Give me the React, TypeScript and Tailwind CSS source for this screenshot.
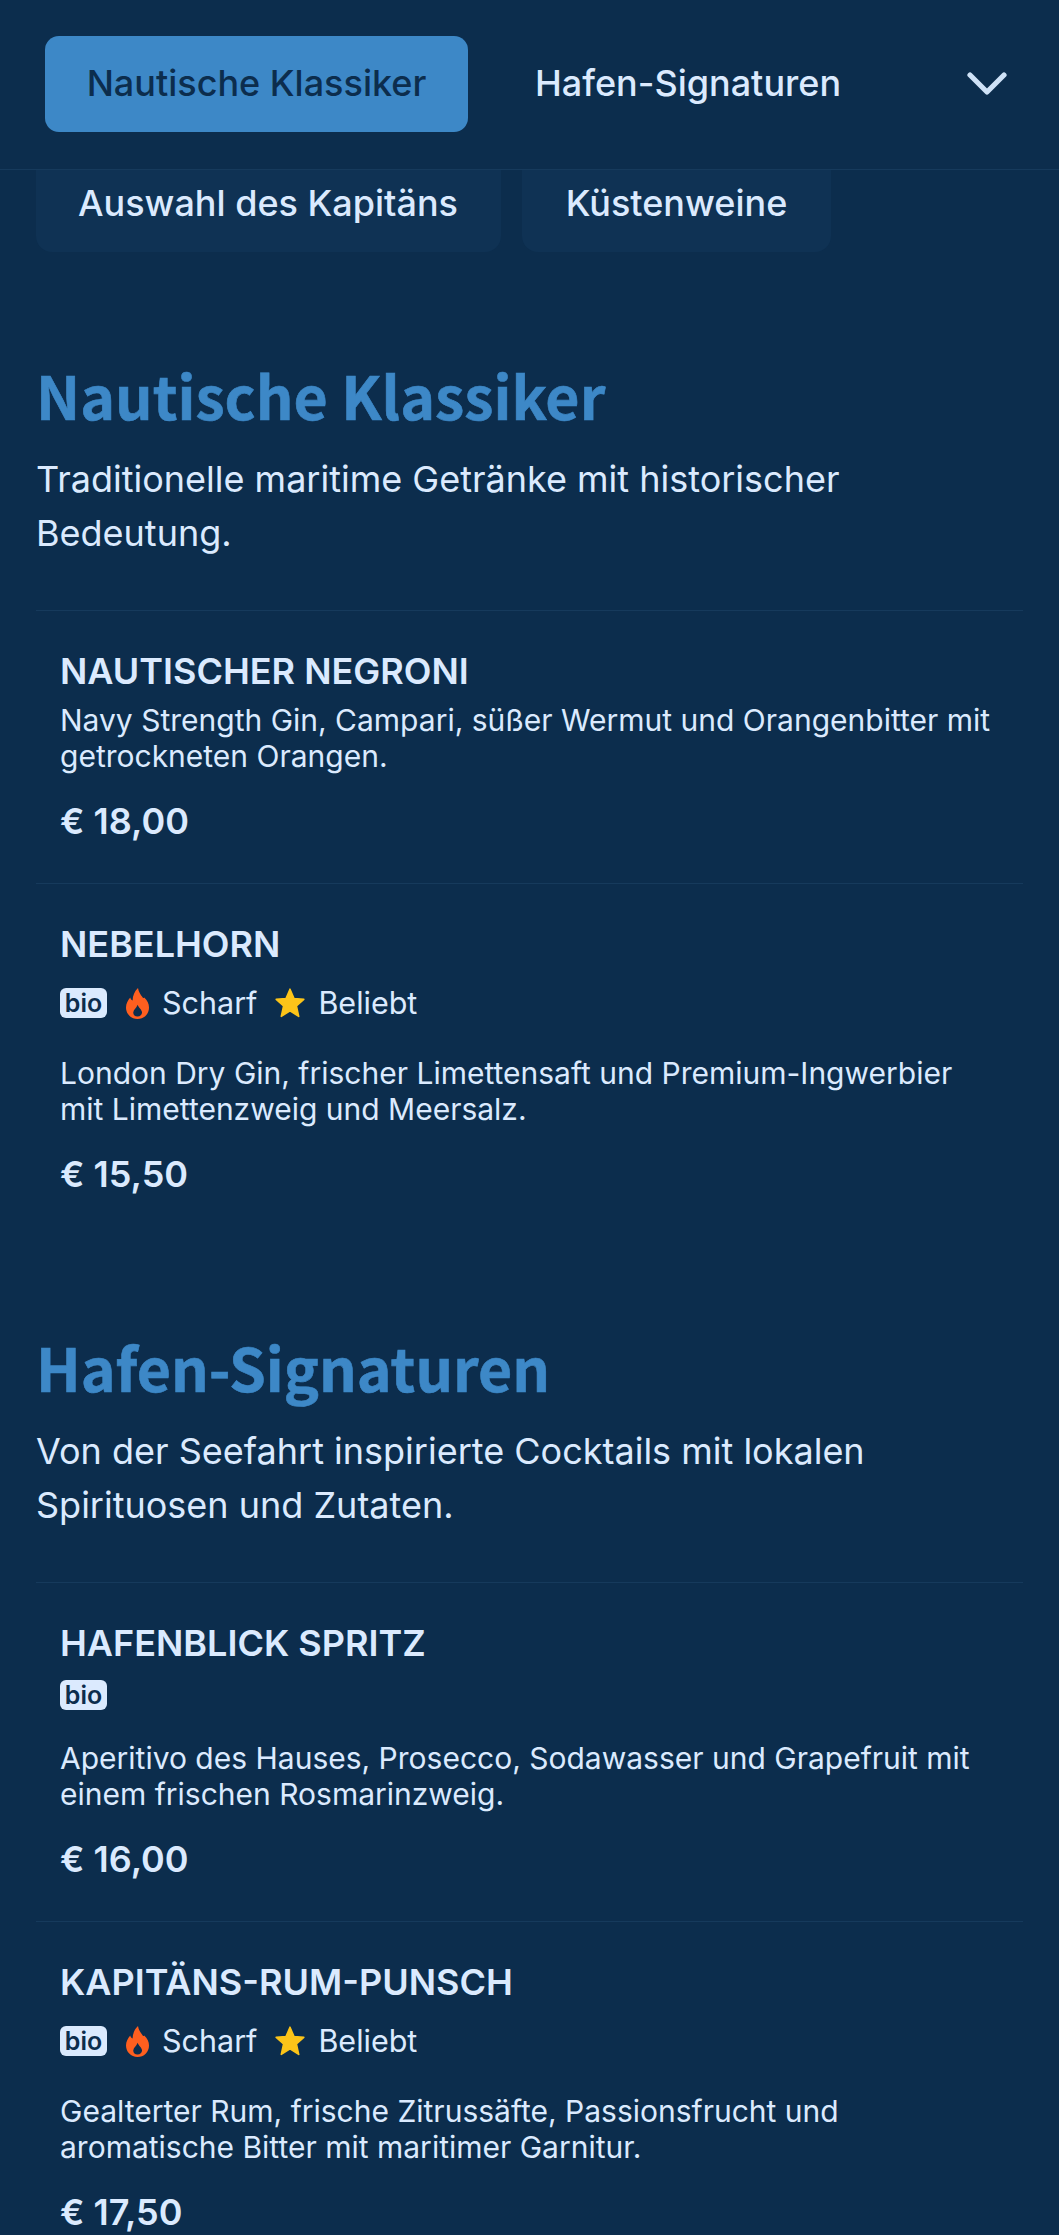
const inter = "font-['Inter','Liberation_Sans',sans-serif]";

function Flame() {
  return (
    <svg className="ml-[19px] shrink-0" width="23" height="31" viewBox="0 0 23 31" fill="#ff5f1f" fillRule="evenodd">
      <path d="M12 0C12.6 4 14.6 6.6 16.4 9C16.9 10 17.4 10.6 18.2 9.4C21.4 12.4 23 15.8 23 19.4C23 26 18 31 11.5 31C5 31 0 26 0 19.6C0 15.6 1.8 12.2 4.2 9.4C4.6 10.8 5.2 11.8 6.6 12.4C6.6 8 8.6 3 12 0ZM11.5 28.6C14.4 28.6 16.2 26.6 16 24.2C15.7 21.6 13 20.2 11.6 16.8C10.4 20 7.7 21.6 7.3 24.2C7 26.6 8.8 28.6 11.5 28.6Z" />
    </svg>
  );
}

function Star() {
  return (
    <svg className="ml-[18px] shrink-0" width="30" height="30" viewBox="0 0 30 30" fill="#fcc419" stroke="#fcc419" strokeWidth="1.6" strokeLinejoin="round">
      <path d="M15 1.2L19 10.6L28.8 11.4L21.4 17.9L23.7 28.4L15 22.9L6.3 28.4L8.6 17.9L1.2 11.4L11 10.6Z" />
    </svg>
  );
}

function Tags({ bio, full }: { bio?: boolean; full?: boolean }) {
  return (
    <div className={`flex items-center ${full ? "h-[34px] mt-[21px] mb-[35px]" : "h-[30px] mt-[16px] mb-[30px]"}`}>
      {bio && (
        <span className="flex items-center justify-center h-[30px] w-[47px] rounded-[6px] bg-[#dbeafe] text-[#0c2d4d] text-[25px] font-semibold leading-none">bio</span>
      )}
      {full && (
        <>
          <Flame />
          <span className="ml-[13px] text-[30.5px] text-[#dbeafe] leading-none">Scharf</span>
          <Star />
          <span className="ml-[13px] text-[30.5px] text-[#dbeafe] leading-none">Beliebt</span>
        </>
      )}
    </div>
  );
}

function Item({ name, desc, price, bio, full, last }: { name: string; desc: React.ReactNode; price: string; bio?: boolean; full?: boolean; last?: boolean }) {
  return (
    <div className={`px-[24px] pt-[39px] ${last ? "pb-0" : "pb-[40px] border-b border-[#163a5c]"}`}>
      <h3 className="text-[36px] leading-[42px] font-semibold text-[#dbeafe]">{name}</h3>
      {bio || full ? <Tags bio={bio} full={full} /> : <div className="h-[10px]" />}
      <p className="text-[30px] leading-[36px] text-[#dbeafe]">{desc}</p>
      <div className="mt-[25px] text-[36px] leading-[44px] font-semibold text-[#dbeafe]">{price}</div>
    </div>
  );
}

function Section({ title, desc, children }: { title: string; desc: React.ReactNode; children: React.ReactNode }) {
  return (
    <section>
      <h2 className="font-['Noto_Sans_CJK_SC',sans-serif] font-bold text-[59px] leading-[80px] [-webkit-text-stroke:0.6px_#3d88c7] text-[#3d88c7]">{title}</h2>
      <p className="mt-[17px] text-[36px] leading-[54px] text-[#dbeafe]">{desc}</p>
      <div className="mt-[50px] border-t border-[#163a5c]">{children}</div>
    </section>
  );
}

export default function App() {
  return (
    <div className={`${inter} w-[1059px] h-[2235px] overflow-hidden bg-[#0c2d4d]`}>
      <header className="h-[170px] flex items-center pl-[45px] pr-[52px] pb-[2px] border-b border-[#163a5c]">
        <div className="w-[423px] h-[96px] rounded-[14px] bg-[#3d88c7] flex items-center justify-center pb-[2px] text-[#0c2d4d] text-[36px] font-medium">Nautische Klassiker</div>
        <div className="ml-[67px] pb-[2px] text-[36px] text-[#dbeafe] font-medium">Hafen-Signaturen</div>
        <svg className="ml-auto" width="40" height="23" viewBox="0 0 40 23" fill="none" stroke="#cfe2f7" strokeWidth="5.2" strokeLinecap="round" strokeLinejoin="round"><path d="M3 3 L20 20 L37 3" /></svg>
      </header>
      <div className="flex gap-[21px] pl-[36px]">
        <div className="w-[465px] h-[82px] rounded-b-[16px] bg-[#0f3254] flex items-center justify-center pb-[16px] pr-[1px] text-[36px] text-[#dbeafe] font-medium">Auswahl des Kapitäns</div>
        <div className="w-[309px] h-[82px] rounded-b-[16px] bg-[#0f3254] flex items-center justify-center pb-[16px] text-[36px] text-[#dbeafe] font-medium">Küstenweine</div>
      </div>
      <main className="px-[36px] pt-[103px]">
        <Section title="Nautische Klassiker" desc={<>Traditionelle maritime Getränke mit historischer<br />Bedeutung.</>}>
          <Item name="NAUTISCHER NEGRONI" desc="Navy Strength Gin, Campari, süßer Wermut und Orangenbitter mit getrockneten Orangen." price="€ 18,00" />
          <Item name="NEBELHORN" bio full last desc="London Dry Gin, frischer Limettensaft und Premium-Ingwerbier mit Limettenzweig und Meersalz." price="€ 15,50" />
        </Section>
        <div className="h-[131px]" />
        <Section title="Hafen-Signaturen" desc={<>Von der Seefahrt inspirierte Cocktails mit lokalen<br />Spirituosen und Zutaten.</>}>
          <Item name="HAFENBLICK SPRITZ" bio desc="Aperitivo des Hauses, Prosecco, Sodawasser und Grapefruit mit einem frischen Rosmarinzweig." price="€ 16,00" />
          <Item name="KAPITÄNS-RUM-PUNSCH" bio full last desc="Gealterter Rum, frische Zitrussäfte, Passionsfrucht und aromatische Bitter mit maritimer Garnitur." price="€ 17,50" />
        </Section>
      </main>
    </div>
  );
}
